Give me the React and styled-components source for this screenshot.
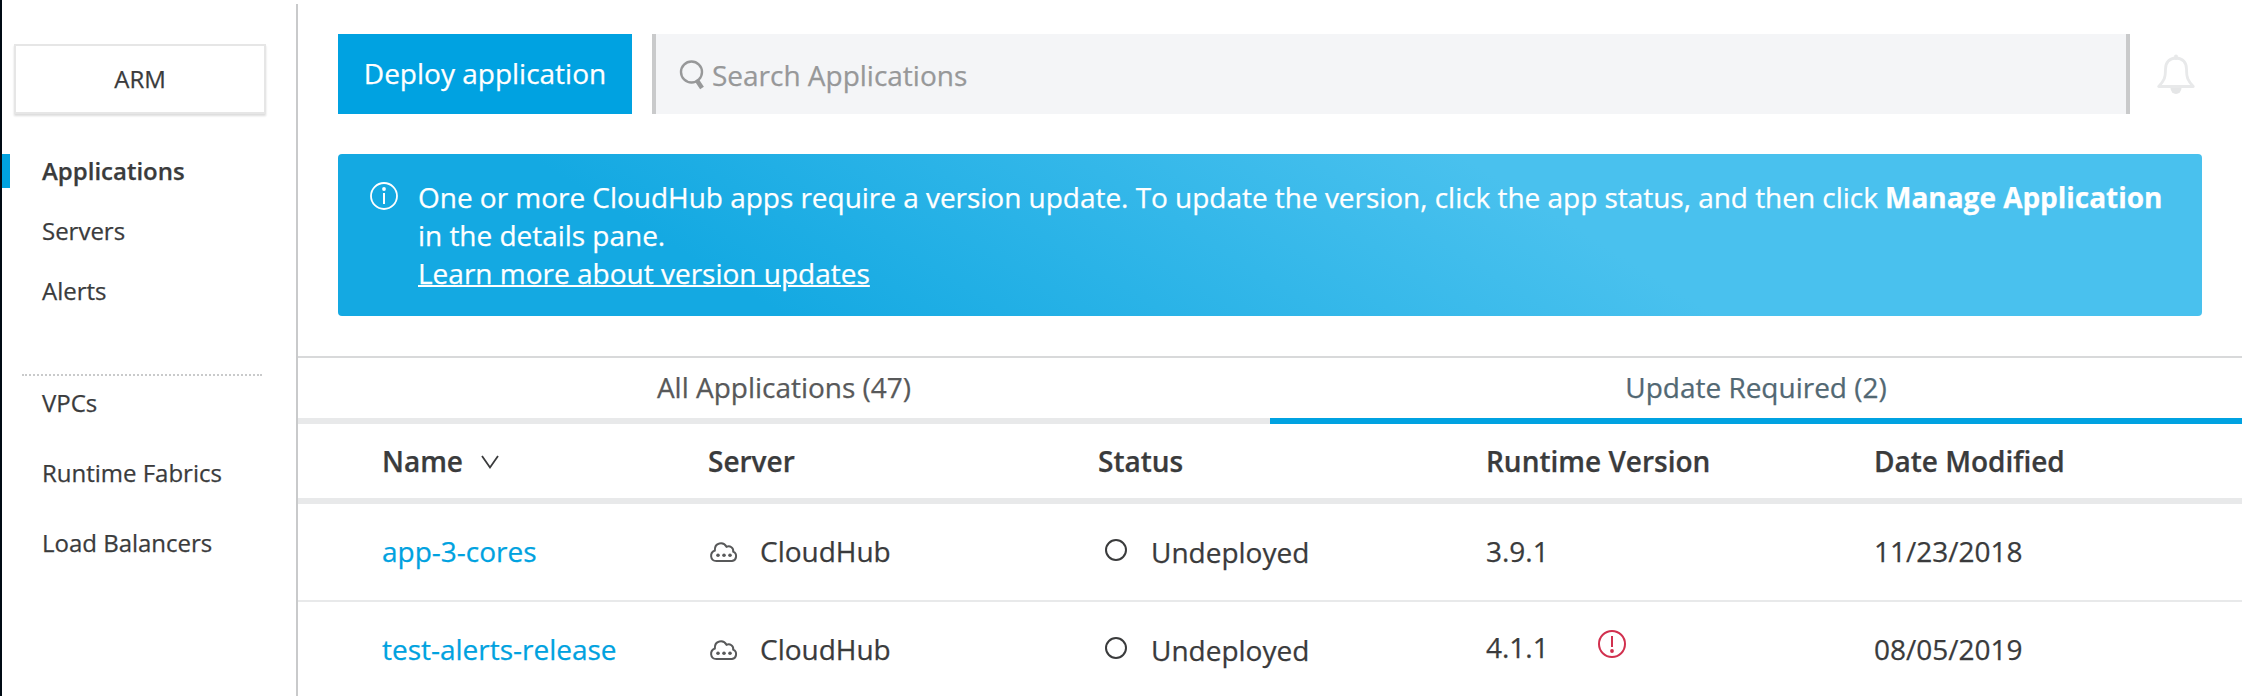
import React from "react";
import styled, { createGlobalStyle } from "styled-components";

const Global = createGlobalStyle`
  * { box-sizing: border-box; }
  body { margin: 0; background: #fff; overflow: hidden; }
`;

const Page = styled.div`
  display: flex;
  height: 696px;
  border-left: 2px solid #000a14;
  background: #fff;
  color: #3a3b3c;
  font-family: "Open Sans", "Noto Sans", sans-serif;
  font-size: 28px;
  line-height: 38px;
  letter-spacing: -0.01px;
  -webkit-text-stroke: 0.25px currentColor;
`;

const Sidebar = styled.aside`
  width: 296px;
  margin-top: 4px;
  padding-top: 40px;
  border-right: 2px solid #c9cacb;
  font-size: 24px;
  line-height: 34px;
`;

const Environment = styled.button`
  display: flex;
  align-items: center;
  justify-content: center;
  width: 252px;
  height: 70px;
  margin: 0 0 40px 12px;
  padding: 0;
  border: 2px solid #e6e6e6;
  background: #fff;
  box-shadow: 0 2px 2px rgba(0, 0, 0, 0.14);
  color: inherit;
  font: inherit;
`;

const NavItem = styled.a`
  display: flex;
  align-items: center;
  height: 34px;
  margin-bottom: ${(p) => p.$gap}px;
  padding-left: ${(p) => (p.$active ? 32 : 40)}px;
  border-left: ${(p) => (p.$active ? "8px solid #00a2df" : "0")};
  font-weight: ${(p) => (p.$active ? 600 : 400)};
`;

const Divider = styled.hr`
  width: 240px;
  margin: 0 0 10px 20px;
  border: 0;
  border-top: 2px dotted #c9cacb;
`;

const Main = styled.main`
  flex: 1;
  min-width: 0;
  padding-top: 34px;
`;

const Toolbar = styled.div`
  display: flex;
  align-items: center;
  height: 80px;
  margin: 0 40px 40px;
`;

const DeployButton = styled.button`
  width: 294px;
  height: 80px;
  margin-right: 20px;
  padding: 0 0 2px;
  border: 0;
  background: #00a2e1;
  color: #fff;
  font: inherit;
`;

const Search = styled.div`
  display: flex;
  align-items: center;
  width: 1478px;
  height: 80px;
  margin-right: 27px;
  padding: 1px 0 0 23px;
  border: solid #c9cacb;
  border-width: 0 4px;
  background: #f4f5f7;
  color: #979899;
  svg { margin: 0 5px 0 0; }
`;

const Banner = styled.section`
  display: flex;
  width: 1864px;
  height: 162px;
  margin: 0 40px 40px;
  padding: 24px 0 0 32px;
  border-radius: 4px;
  background: linear-gradient(32deg, #14a9e2 21%, #49c1ee 65%);
  color: #fff;
  letter-spacing: -0.03px;
  svg { flex: none; margin: 4px 20px 0 0; }
  p { margin: 0; width: 1760px; }
`;

const Link = styled.a`
  text-decoration: underline;
  text-decoration-thickness: 2px;
  letter-spacing: 0;
`;

const Tabs = styled.nav`
  display: flex;
  height: 68px;
  border-top: 2px solid #d8d9da;
`;

const Tab = styled.a`
  flex: 1;
  padding-top: 10px;
  border-bottom: 6px solid ${(p) => (p.$active ? "#00a2e1" : "#e8e9ea")};
  color: ${(p) => (p.$active ? "#526873" : "#58595a")};
  text-align: center;
`;

const Row = styled.div`
  display: grid;
  grid-template-columns: 326px 390px 388px 388px 1fr;
  align-items: center;
  height: ${(p) => (p.$head ? 80 : 98)}px;
  padding-left: 84px;
  border-bottom: ${(p) => (p.$head ? "6px" : "2px")} solid #e8e9ea;
  font-weight: ${(p) => (p.$head ? 600 : 400)};
`;

const Cell = styled.div`
  display: flex;
  align-items: center;
  padding-bottom: ${(p) => p.$lift || 0}px;
  color: ${(p) => (p.$link ? "#00a2df" : "inherit")};
  white-space: nowrap;
`;

const SortIcon = styled.svg`
  margin: 2px 0 0 18px;
`;

const CloudSvg = styled.svg`
  margin: 2px 22px 0 0;
`;

const Ring = styled.span`
  width: 22px;
  height: 22px;
  margin: 0 24px 4px 7px;
  border: 2px solid #3a3b3c;
  border-radius: 50%;
`;

const AlertSvg = styled.svg`
  margin: 0 0 6px 49px;
`;

const SearchIcon = () => (
  <svg width="28" height="32" viewBox="0 0 28 32" fill="none" stroke="#979899">
    <circle cx="12.5" cy="13" r="10.5" strokeWidth="2.4" />
    <path d="M18 21.500 23 29" strokeWidth="4.500" />
  </svg>
);

const BellSvg = styled.svg`
  margin-top: 1px;
`;

const BellIcon = () => (
  <BellSvg width="38" height="42" viewBox="0 0 38 42" fill="none" stroke="#e8e9ea">
    <path
      d="M19 4c-6.500 0-10.500 4.500-10.500 11 0 9-1.500 12-6.800 17.500h34.600c-5.300-5.500-6.800-8.500-6.800-17.500 0-6.500-4-11-10.500-11z"
      strokeWidth="2.800"
      strokeLinejoin="round"
    />
    <path d="M19 2.500v1.500" strokeWidth="4" strokeLinecap="round" />
    <path d="M13.500 34a5.500 6 0 0 0 11 0z" fill="#e5e6e7" stroke="none" />
  </BellSvg>
);

const InfoIcon = () => (
  <svg width="28" height="28" viewBox="0 0 28 28" fill="none" stroke="#fff" strokeWidth="1.8">
    <circle cx="14" cy="14" r="13" />
    <path d="M14 11v11" strokeWidth="2" />
    <circle cx="14" cy="7" r="1.900" fill="#fff" stroke="none" />
  </svg>
);

const CloudIcon = () => (
  <CloudSvg width="30" height="24" viewBox="0 0 30 24" fill="none" stroke="#58595a" strokeWidth="2">
    <path d="M8.500 21h15.500a4.900 4.900 0 0 0 1.200-9.300c.5-4-3-6.200-6.700-5C15.500 1.500 6.500 2.200 6.800 10.500 1.500 12.500 1.800 21 8.500 21z" />
    <g fill="#58595a" stroke="none">
      <circle cx="10" cy="15.300" r="1.800" />
      <circle cx="16" cy="15.300" r="1.800" />
      <circle cx="22" cy="15.300" r="1.800" />
    </g>
  </CloudSvg>
);

const AlertIcon = () => (
  <AlertSvg width="28" height="28" viewBox="0 0 28 28" fill="none" stroke="#d1304e" strokeWidth="2">
    <circle cx="14" cy="14" r="13" />
    <path d="M14 6v11" />
    <circle cx="14" cy="21" r="1.900" fill="#d1304e" stroke="none" />
  </AlertSvg>
);

const apps = [
  { name: "app-3-cores", version: "3.9.1", date: "11/23/2018" },
  { name: "test-alerts-release", version: "4.1.1", date: "08/05/2019", alert: true },
];

export default function App() {
  return (
    <Page>
      <Global />
      <Sidebar>
        <Environment>ARM</Environment>
        <NavItem $active $gap={26}>Applications</NavItem>
        <NavItem $gap={26}>Servers</NavItem>
        <NavItem $gap={66}>Alerts</NavItem>
        <Divider />
        <NavItem $gap={36}>VPCs</NavItem>
        <NavItem $gap={36}>Runtime Fabrics</NavItem>
        <NavItem $gap={0}>Load Balancers</NavItem>
      </Sidebar>
      <Main>
        <Toolbar>
          <DeployButton>Deploy application</DeployButton>
          <Search><SearchIcon />Search Applications</Search>
          <BellIcon />
        </Toolbar>
        <Banner>
          <InfoIcon />
          <p>
            One or more CloudHub apps require a version update. To update the version, click the app
            status, and then click <strong>Manage Application</strong> in the details pane.
            <br />
            <Link>Learn more about version updates</Link>
          </p>
        </Banner>
        <Tabs>
          <Tab>All Applications (47)</Tab>
          <Tab $active>Update Required (2)</Tab>
        </Tabs>
        <Row $head>
          <Cell>
            Name
            <SortIcon width="18" height="16" viewBox="0 0 18 16" fill="none" stroke="#3a3b3c" strokeWidth="1.800">
              <path d="M1 2l8 11.500L17 2" />
            </SortIcon>
          </Cell>
          <Cell>Server</Cell>
          <Cell>Status</Cell>
          <Cell>Runtime Version</Cell>
          <Cell>Date Modified</Cell>
        </Row>
        {apps.map((a) => (
          <Row key={a.name}>
            <Cell $link $lift={2}>{a.name}</Cell>
            <Cell $lift={2}><CloudIcon />CloudHub</Cell>
            <Cell><Ring />Undeployed</Cell>
            <Cell $lift={a.alert ? 6 : 2}>{a.version}{a.alert && <AlertIcon />}</Cell>
            <Cell $lift={2}>{a.date}</Cell>
          </Row>
        ))}
      </Main>
    </Page>
  );
}
